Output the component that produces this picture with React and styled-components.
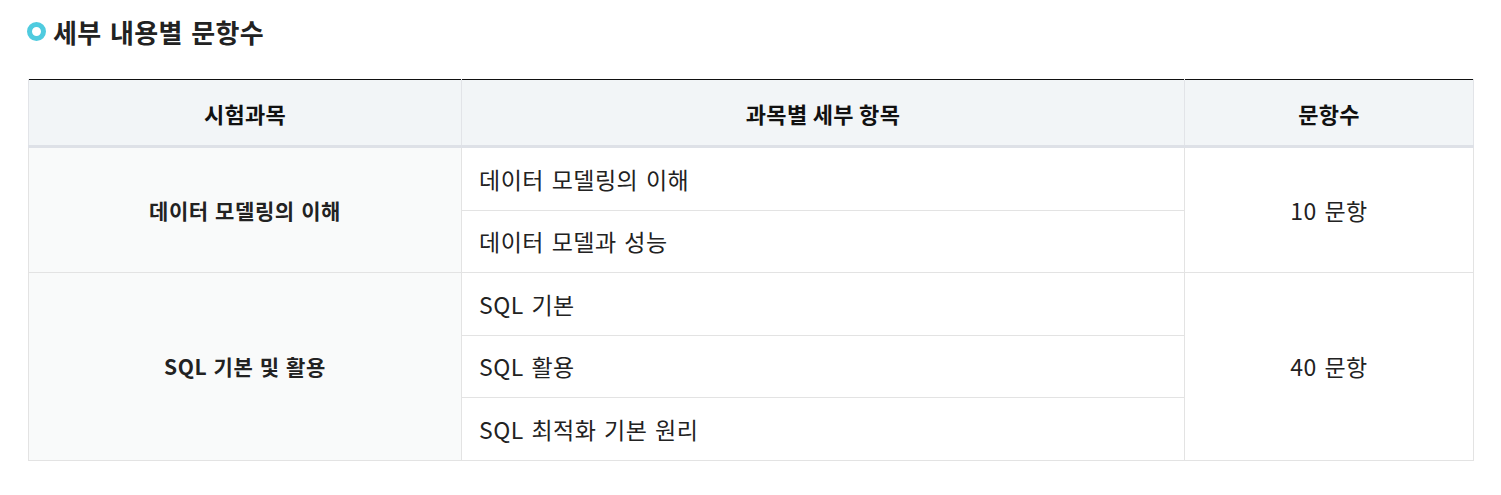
import React from "react";
import styled, { createGlobalStyle } from "styled-components";

const Global = createGlobalStyle`
  html, body { margin: 0; padding: 0; background: #fff; }
  body { font-family: "Noto Sans CJK KR", "Noto Sans", sans-serif; color: #222; }
`;

const Page = styled.div`
  padding: 14px 27px 0 28px;
  width: 1446px;
`;

const Title = styled.h3`
  display: flex;
  align-items: center;
  gap: 7px;
  margin: 0 0 0 -1px;
  height: 34px;
  font-size: 26px;
  font-weight: 700;
  letter-spacing: 0.4px;
  word-spacing: 2px;
  color: #222;
`;

const Dot = styled.span`
  width: 19px;
  height: 19px;
  box-sizing: border-box;
  border-radius: 50%;
  border: 5px solid #4fcbdf;
  flex: none;
`;

const Table = styled.table`
  margin-top: 31px;
  width: 1446px;
  border-collapse: collapse;
  border-top: 1px solid #111;
  table-layout: fixed;
`;

const Th = styled.th`
  height: 65px;
  padding: 0;
  background: #f2f5f7;
  border-left: 1px solid #e2e4e8;
  border-right: 1px solid #e2e4e8;
  border-bottom: 3px solid #dee1e7;
  font-size: 22px;
  font-weight: 700;
  letter-spacing: 0.3px;
  color: #111;
  text-align: center;
`;

const Td = styled.td`
  height: 61.5px;
  padding: 0 ${p => (p.$left ? "17px" : "0")};
  border: 1px solid #e3e3e3;
  background: ${p => (p.$shade ? "#f9fafa" : "#fff")};
  font-size: ${p => (p.$bold ? "21px" : "23px")};
  letter-spacing: ${p => (p.$bold ? "0.6px" : "0.5px")};
  word-spacing: ${p => (p.$bold ? "1px" : "2px")};
  font-weight: ${p => (p.$bold ? 700 : 400)};
  color: #222;
  text-align: ${p => (p.$left ? "left" : "center")};
  vertical-align: middle;
`;

const groups = [
  { subject: "데이터 모델링의 이해", items: ["데이터 모델링의 이해", "데이터 모델과 성능"], count: "10 문항" },
  { subject: "SQL 기본 및 활용", items: ["SQL 기본", "SQL 활용", "SQL 최적화 기본 원리"], count: "40 문항" },
];

export default function App() {
  return (
    <Page>
      <Global />
      <Title>
        <Dot />
        세부 내용별 문항수
      </Title>
      <Table>
        <colgroup>
          <col style={{ width: 433 }} />
          <col style={{ width: 723 }} />
          <col />
        </colgroup>
        <thead>
          <tr>
            <Th>시험과목</Th>
            <Th>과목별 세부 항목</Th>
            <Th>문항수</Th>
          </tr>
        </thead>
        <tbody>
          {groups.map(g =>
            g.items.map((item, i) => (
              <tr key={g.subject + item}>
                {i === 0 && (
                  <Td rowSpan={g.items.length} $shade $bold>
                    {g.subject}
                  </Td>
                )}
                <Td $left>{item}</Td>
                {i === 0 && <Td rowSpan={g.items.length}>{g.count}</Td>}
              </tr>
            ))
          )}
        </tbody>
      </Table>
    </Page>
  );
}
